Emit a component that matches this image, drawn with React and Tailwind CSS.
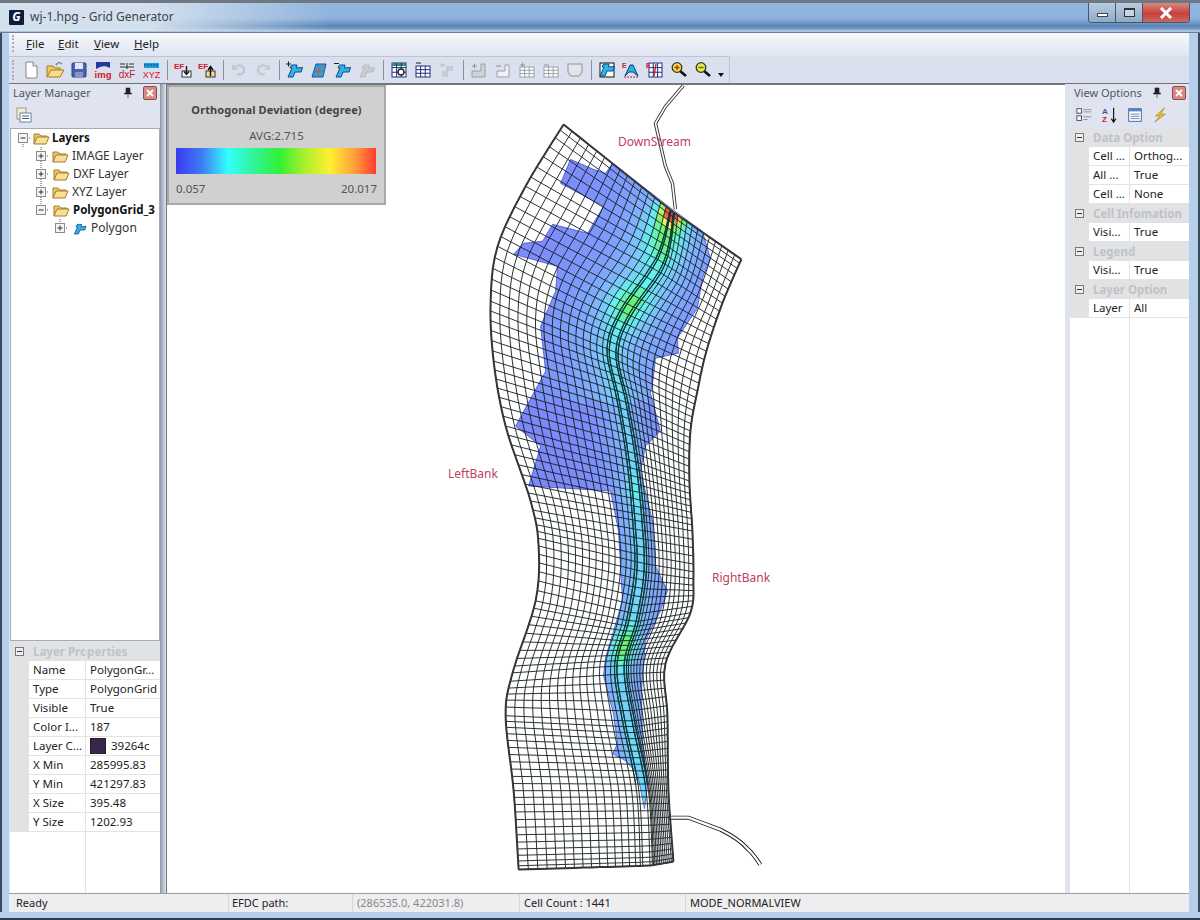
import React from 'react';

// --- grid mesh ---------------------------------------------------------
const stations = [
  [[563, 123], [672, 210], [741, 258]],
  [[525, 185], [660, 260], [722, 302]],
  [[497, 245], [625, 312], [706, 350]],
  [[490, 300], [612, 350], [697, 390]],
  [[493, 360], [622, 400], [690, 430]],
  [[505, 425], [632, 460], [689, 480]],
  [[530, 500], [638, 520], [692, 530]],
  [[538, 545], [640, 570], [693, 578]],
  [[535, 600], [632, 620], [690, 612]],
  [[512, 672], [620, 665], [665, 663]],
  [[505, 715], [628, 720], [667, 715]],
  [[513, 790], [642, 790], [668, 790]],
  [[518, 869], [646, 865], [673, 861]],
];
const rowsPerSpan = [7, 6, 5, 6, 7, 8, 6, 6, 9, 6, 11, 12];

const wetPolygon = [
  [570, 158], [593, 168], [605, 172], [612, 162], [672, 208], [702, 230], [710, 257], [702, 277], [697, 307],
  [677, 337], [678, 352], [655, 357], [653, 377], [650, 392], [660, 430], [645, 445], [640, 470], [652, 520],
  [655, 565], [667, 590], [660, 610], [645, 640], [641, 690], [642, 740], [647, 785], [644, 808], [637, 773],
  [625, 760], [612, 753], [617, 743], [613, 713], [603, 675], [605, 657], [622, 600], [618, 530], [610, 490],
  [528, 485], [540, 445], [515, 425], [545, 370], [540, 325], [555, 290], [557, 265], [513, 253], [523, 242],
  [542, 240], [552, 223], [587, 232], [603, 205], [560, 182],
];

const hotspots = [
  [673, 212, 0.72, 13],
  [660, 238, 0.18, 28],
  [628, 302, 0.2, 24],
  [622, 645, 0.22, 20],
  [634, 490, 0.08, 18],
];

const colorStops = [
  [0, [124, 128, 250]],
  [0.25, [127, 184, 255]],
  [0.42, [102, 240, 240]],
  [0.55, [102, 242, 110]],
  [0.78, [240, 240, 102]],
  [1, [240, 70, 50]],
];

function catmull(a, b, c, d, t) {
  return 0.5 * (2 * b + (c - a) * t + (2 * a - 5 * b + 4 * c - d) * t * t + (3 * b - a - 3 * c + d) * t * t * t);
}

function stationAt(u) {
  const i = Math.min(Math.floor(u), stations.length - 2);
  const t = u - i;
  const pick = (n) => stations[Math.max(0, Math.min(stations.length - 1, n))];
  return [0, 1, 2].map((p) => [0, 1].map((xy) => catmull(pick(i - 1)[p][xy], pick(i)[p][xy], pick(i + 1)[p][xy], pick(i + 2)[p][xy], t)));
}

const nL = 15;
const nR = 12;

function buildMesh() {
  const rows = [];
  rowsPerSpan.forEach((count, span) => {
    for (let k = 0; k < count; k++) rows.push(span + k / count);
  });
  rows.push(stations.length - 1);
  return rows.map((u) => {
    const [L, C, R] = stationAt(u);
    const len = Math.hypot(R[0] - L[0], R[1] - L[1]);
    const dir = [(R[0] - L[0]) / len, (R[1] - L[1]) / len];
    const w = Math.min(6, 2.5 + u * 3);
    const at = (o) => [C[0] + dir[0] * o * w, C[1] + dir[1] * o * w];
    const points = [];
    const CL = at(-1);
    const CR = at(1);
    for (let k = 0; k <= nL; k++) {
      const g = 1 - Math.pow(1 - k / nL, 1.2);
      points.push([L[0] + (CL[0] - L[0]) * g, L[1] + (CL[1] - L[1]) * g]);
    }
    [-0.6, 0.6].forEach((o) => points.push(at(o)));
    for (let k = 0; k <= nR; k++) {
      const g = Math.pow(k / nR, 1.2);
      points.push([CR[0] + (R[0] - CR[0]) * g, CR[1] + (R[1] - CR[1]) * g]);
    }
    return { u, points, C };
  });
}

function pointInPolygon(x, y) {
  let inside = false;
  for (let i = 0, j = wetPolygon.length - 1; i < wetPolygon.length; j = i++) {
    const [xi, yi] = wetPolygon[i];
    const [xj, yj] = wetPolygon[j];
    if (yi > y !== yj > y && x < ((xj - xi) * (y - yi)) / (yj - yi) + xi) inside = !inside;
  }
  return inside;
}

function deviationColor(x, y, C) {
  const d = Math.hypot(x - C[0], y - C[1]);
  const spread = y < 400 ? 38 : y < 520 ? 16 : 20;
  let v = 0.04 + 0.36 * Math.exp(-d / spread);
  hotspots.forEach(([hx, hy, a, r]) => {
    const q = Math.hypot(x - hx, y - hy) / r;
    v += a * Math.exp(-q * q);
  });
  v = Math.min(1, v);
  for (let i = 1; i < colorStops.length; i++) {
    if (v <= colorStops[i][0]) {
      const [a, ca] = colorStops[i - 1];
      const [b, cb] = colorStops[i];
      const t = (v - a) / (b - a);
      return `rgb(${ca.map((c, n) => Math.round(c + (cb[n] - c) * t)).join(',')})`;
    }
  }
  return 'rgb(240,70,50)';
}

const mesh = buildMesh();
const toPath = (pts) => 'M' + pts.map((p) => `${p[0].toFixed(1)} ${p[1].toFixed(1)}`).join('L');
const columnCount = mesh[0].points.length;

const rowLines = mesh.map((r) => toPath(r.points)).join('');
const columnLines = Array.from({ length: columnCount }, (_, c) => toPath(mesh.map((r) => r.points[c]))).join('');
const channelLines = [nL, nL + 1, nL + 2, nL + 3]
  .map((c) => toPath(mesh.filter((r) => r.u < 11).map((r) => r.points[c])))
  .join('');
const outline =
  toPath(mesh[0].points) +
  toPath(mesh.map((r) => r.points[columnCount - 1])) +
  toPath(mesh[mesh.length - 1].points) +
  toPath(mesh.map((r) => r.points[0]));

const cells = [];
for (let r = 0; r < mesh.length - 1; r++) {
  for (let c = 0; c < columnCount - 1; c++) {
    const quad = [mesh[r].points[c], mesh[r].points[c + 1], mesh[r + 1].points[c + 1], mesh[r + 1].points[c]];
    if (!quad.some((p) => pointInPolygon(p[0], p[1]))) {
      const mx = (quad[0][0] + quad[2][0]) / 2;
      const my = (quad[0][1] + quad[2][1]) / 2;
      if (!pointInPolygon(mx, my)) continue;
    }
    const x = quad.reduce((s, p) => s + p[0], 0) / 4;
    const y = quad.reduce((s, p) => s + p[1], 0) / 4;
    cells.push({ d: toPath(quad) + 'Z', fill: deviationColor(x, y, mesh[r].C) });
  }
}

function GridDrawing() {
  const riverTop = 'M683 84L665 105L655 122L665 165L672 182L675 208';
  const riverBottom = 'M668 817L688 817L720 829C732 835 742 842 747 848C752 852 756 858 760 864';
  return (
    <svg className="block h-full w-full" viewBox="166 84 899 808">
      <defs>
        <clipPath id="wet">
          <polygon points={wetPolygon.map((p) => p.join(',')).join(' ')} />
        </clipPath>
      </defs>
      <path d={riverTop} fill="none" stroke="#333" strokeWidth="3.4" />
      <path d={riverTop} fill="none" stroke="#fff" strokeWidth="1.6" />
      <path d={riverBottom} fill="none" stroke="#222" strokeWidth="4" />
      <path d={riverBottom} fill="none" stroke="#fff" strokeWidth="2.2" />
      <g clipPath="url(#wet)">
        {cells.map((cell, i) => (
          <path key={i} d={cell.d} fill={cell.fill} stroke={cell.fill} strokeWidth="0.5" />
        ))}
      </g>
      <polygon points={wetPolygon.map((p) => p.join(',')).join(' ')} fill="none" stroke="#3b3fd0" strokeWidth="0.7" />
      <path d={rowLines} fill="none" stroke="#141c1c" strokeWidth="0.9" />
      <path d={columnLines} fill="none" stroke="#141c1c" strokeWidth="0.9" />
      <path d={channelLines} fill="none" stroke="#0a3a3a" strokeWidth="1.2" />
      <path d={outline} fill="none" stroke="#33363c" strokeWidth="2" strokeLinejoin="round" />
    </svg>
  );
}

// --- small icons ---------------------------------------------------------
function Ico({ children, size = 20 }) {
  return (
    <svg width={size} height={size} viewBox="0 0 20 20" className="block">
      {children}
    </svg>
  );
}

const tiny = { fontFamily: '"Liberation Sans", sans-serif', fontWeight: 700 };
const PolyShape = ({ fill = '#2fb4e8', stroke = '#124a8c', x = 0, y = 0 }) => (
  <path transform={`translate(${x} ${y})`} d="M3 17L7 8H5L6.500 5H12L11.500 8L17.500 7.500L16 12L10 12L8 17Z" fill={fill} stroke={stroke} strokeWidth="1" />
);
const TableGrid = ({ x = 3, y = 6, w = 14, h = 11, stroke = '#1f2f80', head }) => (
  <g>
    <rect x={x} y={y} width={w} height={h} fill="#fff" stroke={stroke} />
    {head && <rect x={x} y={y} width={w} height="3" fill={head} />}
    {[0.33, 0.66].map((f) => (
      <path key={f} d={`M${x} ${y + h * f}H${x + w}M${x + w * f} ${y}V${y + h}`} stroke={stroke} />
    ))}
  </g>
);

const toolbarIcons = [
  <Ico key="new"><path d="M5 2H12L16 6V18H5Z" fill="#fff" stroke="#888" /><path d="M12 2V6H16" fill="#e8e8e8" stroke="#888" /></Ico>,
  <Ico key="open"><path d="M2 17V6H8L10 8H15V10" fill="#f0c860" stroke="#a87a20" /><path d="M2 17L6 10H19L15 17Z" fill="#f9dc8a" stroke="#a87a20" /><path d="M11 5C13 2 15 2 17 4" fill="none" stroke="#6a7f9a" strokeWidth="1.4" /></Ico>,
  <Ico key="save"><rect x="3" y="3" width="14" height="14" rx="1" fill="#4a62b4" stroke="#2f3f88" /><rect x="6" y="3" width="8" height="6" fill="#dfe6f5" /><rect x="6" y="12" width="8" height="5" fill="#8a94c0" /></Ico>,
  <Ico key="img"><path d="M3 2H17V8C12 5 8 6 3 9Z" fill="#2436a8" /><text x="10" y="18" textAnchor="middle" fontSize="9.5" fill="#d8152a" style={tiny}>img</text></Ico>,
  <Ico key="dxf"><path d="M3 4H8M12 4H17M3 7H17M10 3V9" stroke="#333" /><text x="10" y="18" textAnchor="middle" fontSize="10" fill="#c8152a" style={{ ...tiny, fontWeight: 400 }}>dxF</text></Ico>,
  <Ico key="xyz"><rect x="3" y="3" width="15" height="5" fill="#16a0d8" /><path d="M3 5H18" stroke="#123a80" strokeDasharray="2 1" /><text x="10.500" y="18" textAnchor="middle" fontSize="9" fill="#d8152a" style={{ ...tiny, fontWeight: 400 }}>XYZ</text></Ico>,
  'sep',
  <Ico key="ef1"><text x="1" y="9" fontSize="8" fill="#d8152a" style={tiny}>EF</text><rect x="9" y="11" width="9" height="6" fill="#fff" stroke="#333" /><path d="M13.500 6V14M11 11.500L13.500 14.500L16 11.500" fill="none" stroke="#111" strokeWidth="1.3" /></Ico>,
  <Ico key="ef2"><text x="1" y="9" fontSize="8" fill="#d8152a" style={tiny}>EF</text><rect x="9" y="11" width="9" height="6" fill="#f6d98a" stroke="#333" /><path d="M13.500 16V7M11 10L13.500 6.500L16 10" fill="none" stroke="#111" strokeWidth="1.4" /></Ico>,
  'sep',
  <Ico key="undo"><path d="M5 8C8 4 15 5 15 10C15 14 11 15 8 14" fill="none" stroke="#c4c8cf" strokeWidth="2.6" /><path d="M3 4V10H9Z" fill="#c4c8cf" /></Ico>,
  <Ico key="redo"><path d="M15 8C12 4 5 5 5 10C5 14 9 15 12 14" fill="none" stroke="#c8ccd2" strokeWidth="2.6" /><path d="M17 4V10H11Z" fill="#c8ccd2" /></Ico>,
  'sep',
  <Ico key="poly1"><PolyShape /><path d="M1 4H6M3.500 1.500V6.500" stroke="#123" /></Ico>,
  <Ico key="poly2"><path d="M3 17L7 4H17L14 17Z" fill="#29a0d8" stroke="#1f4fa8" /><path d="M5 11H16M12 4L8.500 17" stroke="#d8552a" /></Ico>,
  <Ico key="poly3"><PolyShape /><path d="M1 3.500H6" stroke="#123" /></Ico>,
  <Ico key="poly4"><PolyShape fill="#c8ccd2" stroke="#bbb" /></Ico>,
  'sep',
  <Ico key="tab1"><TableGrid x={3} y={3} h={14} head="#2f8f6f" /><circle cx="12" cy="12" r="3" fill="#fff" stroke="#222" strokeWidth="1.4" /></Ico>,
  <Ico key="tab2"><path d="M3 3H8" stroke="#123" /><TableGrid y={6} /></Ico>,
  <Ico key="tab3"><path d="M3 5H8M5.500 2.500V7.500" stroke="#c4c8cf" strokeWidth="1.4" /><path d="M9 6H16V11H11V17H5V11H9Z" fill="#c8ccd2" /></Ico>,
  'sep',
  <Ico key="b1"><path d="M3 6H8M5.500 3.500V8.500" stroke="#8b9099" /><path d="M3 11H12V4H16V17H3Z" fill="#d0d4da" stroke="#9aa0a8" /></Ico>,
  <Ico key="b2"><path d="M3 6H8" stroke="#8b9099" /><path d="M4 11H12V5H16V17H4Z" fill="#f0f2f6" stroke="#9aa0a8" /></Ico>,
  <Ico key="b3"><path d="M3 5H8M5.500 2.500V7.500" stroke="#8b9099" /><TableGrid y={7} w={14} h={10} stroke="#9aa0a8" /></Ico>,
  <Ico key="b4"><path d="M3 5H8" stroke="#8b9099" /><TableGrid y={7} w={14} h={10} stroke="#9aa0a8" /></Ico>,
  <Ico key="b5"><path d="M3 4H17V12L14 16H6L3 12Z" fill="#e4e6ea" stroke="#aab0b6" strokeWidth="1.6" /></Ico>,
  'sep',
  <Ico key="c1"><rect x="3" y="3" width="14" height="14" fill="#fff" stroke="#111" /><PolyShape x={0} y={-1} /></Ico>,
  <Ico key="c2"><path d="M4 16L9 5L12 5L17 16L12 12L8 12Z" fill="#22b6e0" stroke="#123a90" /><text x="1" y="8" fontSize="7" fill="#d8152a" style={tiny}>E</text><path d="M3 17H17" stroke="#d8152a" strokeDasharray="2 1" /></Ico>,
  <Ico key="c3"><TableGrid x={4} y={3} w={13} h={14} /><path d="M11 4L9 16" stroke="#d8152a" strokeWidth="1.4" /><text x="1" y="8" fontSize="7" fill="#d8152a" style={tiny}>E</text></Ico>,
  <Ico key="z1"><path d="M11 11L17 16" stroke="#111" strokeWidth="2.6" /><circle cx="8" cy="7.500" r="4.800" fill="#e8e83a" stroke="#333" strokeWidth="1.3" /><path d="M5.500 7.500H10.500M8 5V10" stroke="#d8152a" strokeWidth="1.3" /></Ico>,
  <Ico key="z2"><path d="M11 11L17 16" stroke="#111" strokeWidth="2.6" /><circle cx="8" cy="7.500" r="4.800" fill="#e8e83a" stroke="#333" strokeWidth="1.3" /><path d="M5.500 7.500H10.500" stroke="#555" strokeWidth="1.3" /></Ico>,
];

const FolderIcon = () => (
  <svg width="17" height="14" viewBox="0 0 17 14" className="shrink-0">
    <path d="M1 13V3H6L8 5H14V7" fill="#f0c860" stroke="#a47c2c" />
    <path d="M1 13L4 6H16L13 13Z" fill="#f9e098" stroke="#a47c2c" />
  </svg>
);

function PlusMinus({ open, down = true, up = true }) {
  return (
    <svg width="16" height="18" viewBox="0 0 16 18" className="shrink-0">
      <path d={`M8 ${up ? 0 : 9}V${down ? 18 : 9}M8 9H16`} stroke="#555" strokeDasharray="1 1" fill="none" />
      <rect x="3.500" y="4.500" width="9" height="9" fill="#f4f4f4" stroke="#8a8a8a" />
      <path d={open ? 'M5.500 9H10.500' : 'M5.500 9H10.500M8 6.500V11.500'} stroke="#333" />
    </svg>
  );
}

const treeRows = [
  { label: 'Layers', pad: 'pl-[4px]', open: true, bold: true, up: false, icon: 'folder', gap: 'gap-[2px]' },
  { label: 'IMAGE Layer', pad: 'pl-[22px]', icon: 'folder', gap: 'gap-[3px]' },
  { label: 'DXF Layer', pad: 'pl-[22px]', icon: 'folder', gap: 'gap-[3.5px]' },
  { label: 'XYZ Layer', pad: 'pl-[22px]', icon: 'folder', gap: 'gap-[3px]' },
  { label: 'PolygonGrid_3', pad: 'pl-[22px]', open: true, bold: true, down: false, icon: 'folder', gap: 'gap-[3.5px]' },
  { label: 'Polygon', pad: 'pl-[41px]', icon: 'poly', down: false, gap: 'gap-[3.5px]' },
];

const layerProps = [
  ['Name', 'PolygonGr...'],
  ['Type', 'PolygonGrid'],
  ['Visible', 'True'],
  ['Color I...', '187'],
  ['Layer C...', '39264c', true],
  ['X Min', '285995.83'],
  ['Y Min', '421297.83'],
  ['X Size', '395.48'],
  ['Y Size', '1202.93'],
];

const viewGroups = [
  ['Data Option', [['Cell ...', 'Orthog...'], ['All ...', 'True'], ['Cell ...', 'None']]],
  ['Cell Infomation', [['Visi...', 'True']]],
  ['Legend', [['Visi...', 'True']]],
  ['Layer Option', [['Layer', 'All']]],
];

function PanelHeader({ title, closeMargin }) {
  return (
    <div className="flex h-[18px] items-center pl-[4px] pr-[2px] text-[11px] text-[#50565e]">
      <span className="flex-1">{title}</span>
      <svg width="10" height="12" viewBox="0 0 10 12" className="mr-[10px]">
        <path d="M3 1H7V6H8.500V7H1.500V6H3ZM5 7V11" fill="#222" stroke="#222" strokeWidth="0.6" />
      </svg>
      <span className={`flex h-[14px] w-[14px] items-center justify-center rounded-[2px] border border-[#8a4a48] bg-[#d88a82] ${closeMargin}`}>
        <svg width="8" height="8" viewBox="0 0 8 8">
          <path d="M1 1L7 7M7 1L1 7" stroke="#fff" strokeWidth="1.8" />
        </svg>
      </span>
    </div>
  );
}

function GroupRow({ title }) {
  return (
    <div className="flex h-[19px] shrink-0 items-center bg-[#e1e2e4] pl-[5px]">
      <span className="flex h-[9px] w-[9px] items-center justify-center border border-[#777] bg-[#eee]">
        <span className="h-px w-[5px] bg-[#333]" />
      </span>
      <span className="pl-[9px] text-[11.5px] font-bold text-[#c0c2c6]">{title}</span>
    </div>
  );
}

function PropRow({ name, value, swatch, nameWidth }) {
  return (
    <div className="flex h-[19px] shrink-0 text-[11.5px]">
      <div className="w-[19px] shrink-0 bg-[#e1e2e4]" />
      <div className={`${nameWidth} shrink-0 truncate border-b border-r border-[#e2e3e5] bg-white pl-[4px] text-[#222]`}>{name}</div>
      <div className="flex min-w-0 flex-1 items-center gap-[5px] border-b border-[#e2e3e5] bg-white pl-[4px] text-[#222]">
        {swatch && <span className="h-[16px] w-[16px] shrink-0 border border-[#222] bg-[#39264c]" />}
        <span>{value}</span>
      </div>
    </div>
  );
}

function LeftPanel() {
  return (
    <div className="flex w-[151px] shrink-0 flex-col bg-[#dfe4f0]">
      <PanelHeader title="Layer Manager" closeMargin="mr-[1px]" />
      <div className="flex h-[26px] items-center pl-[6px]">
        <svg width="18" height="18" viewBox="0 0 18 18">
          <rect x="2" y="2" width="9" height="11" fill="#f4ecd0" stroke="#9a9a8a" />
          <rect x="5" y="7" width="11" height="9" fill="#fff" stroke="#6f7f99" />
          <path d="M7 10H14M7 12.500H14" stroke="#40608c" />
        </svg>
      </div>
      <div className="ml-px flex h-[513px] flex-col border border-[#a8abb2] bg-white">
        {treeRows.map((row) => (
          <div key={row.label} className={`flex h-[18px] shrink-0 items-center ${row.pad} ${row.gap}`}>
            <PlusMinus open={row.open} down={row.down !== false} up={row.up !== false} />
            {row.icon === 'folder' ? (
              <FolderIcon />
            ) : (
              <svg width="16" height="14" viewBox="0 0 20 17" className="shrink-0">
                <PolyShape y={-1} />
              </svg>
            )}
            <span className={row.bold ? 'text-[11.5px] font-bold text-[#111]' : 'text-[#333]'}>{row.label}</span>
          </div>
        ))}
      </div>
      <div className="relative ml-px mt-[1px] flex flex-1 flex-col bg-white">
        <div className="absolute bottom-0 left-[75px] top-0 w-px bg-[#e2e3e5]" />
        <GroupRow title="Layer Properties" />
        {layerProps.map(([name, value, swatch]) => (
          <div key={name} className="relative">
            <PropRow name={name} value={value} swatch={swatch} nameWidth="w-[57px]" />
          </div>
        ))}
      </div>
    </div>
  );
}

function RightPanel() {
  return (
    <div className="flex w-[119px] shrink-0 flex-col bg-[#dfe4f0]">
      <PanelHeader title="View Options" closeMargin="mr-[1px]" />
      <div className="flex h-[26px] items-center gap-[7px] pl-[6px]">
        <Ico size={18}>
          <rect x="1" y="3" width="5" height="5" fill="#fff" stroke="#444" />
          <rect x="1" y="11" width="5" height="5" fill="#fff" stroke="#444" />
          <path d="M8 4H17M8 6.500H17M8 12H17M8 15H13" stroke="#8a93a8" />
        </Ico>
        <Ico size={18}>
          <text x="1" y="9" fontSize="9" fill="#3a56a8" style={tiny}>A</text>
          <text x="1" y="18" fontSize="9" fill="#c8203a" style={tiny}>Z</text>
          <path d="M14 2V17M11.500 14L14 18L16.500 14" fill="none" stroke="#111" strokeWidth="1.3" />
        </Ico>
        <Ico size={18}>
          <rect x="3" y="3" width="14" height="14" fill="#fff" stroke="#3a5aa0" />
          <rect x="3" y="3" width="14" height="3" fill="#5a86c8" />
          <path d="M5 9H15M5 11.500H15M5 14H15" stroke="#5a7ab0" />
        </Ico>
        <Ico size={18}>
          <path d="M15 2L5 11H10L4 18L16 9H11Z" fill="#f0c020" stroke="#a08020" strokeWidth="0.7" />
        </Ico>
      </div>
      <div className="relative flex flex-1 flex-col bg-white">
        <div className="absolute bottom-0 left-[59px] top-0 w-px bg-[#e2e3e5]" />
        {viewGroups.map(([title, rows]) => (
          <div key={title} className="relative flex flex-col">
            <GroupRow title={title} />
            {rows.map(([name, value], i) => (
              <PropRow key={i} name={name} value={value} nameWidth="w-[41px]" />
            ))}
          </div>
        ))}
      </div>
    </div>
  );
}

function Legend() {
  return (
    <div className="absolute left-0 top-0 flex h-[120px] w-[219px] flex-col border-2 border-[#a6a8ac] bg-[#d0d0d0] px-[7px]">
      <div className="mt-[14px] text-center text-[11px] font-bold leading-[18px] tracking-[0.1px] text-[#444]">Orthogonal Deviation (degree)</div>
      <div className="mt-[8px] text-center text-[11.5px] leading-[18px] text-[#555]">AVG:2.715</div>
      <div className="mt-[3px] h-[26px] w-[200px] bg-[linear-gradient(to_right,#3a3af0_0%,#3f7cf5_13%,#33ffff_26%,#30f5a0_38%,#33f033_52%,#a8f02e_64%,#fff030_77%,#ff9a3a_90%,#ff3a30_100%)]" />
      <div className="mt-[6px] flex justify-between text-[11.5px] leading-[18px] text-[#555]">
        <span>0.057</span>
        <span>20.017</span>
      </div>
    </div>
  );
}

export default function App() {
  return (
    <div className="flex h-[920px] w-[1200px] flex-col overflow-hidden bg-[#a9c8ea] font-['Noto_Sans','Liberation_Sans',sans-serif] text-[12px] leading-[18px]">
      <div className="flex h-[33px] shrink-0 items-start border-t-[3px] border-[#6f7880] bg-[linear-gradient(to_bottom,#8fb5df_0%,#8fb3dd_50%,#5a85b6_78%,#7ea4cf_88%,#c4d8ee_94%,#3f5f85_100%)]">
        <div className="flex h-[28px] w-[330px] items-center bg-[linear-gradient(to_right,#d3e0ee_0%,#d3e0ee_45%,rgba(211,224,238,0)_100%)] pl-[9px]">
          <span className="flex h-[15px] w-[15px] items-center justify-center rounded-[1px] bg-[#0d1b3e] text-[12px] font-bold italic text-white">G</span>
          <span className="pl-[6px] text-[12px] text-[#3d434b]">wj-1.hpg - Grid Generator</span>
        </div>
        <div className="ml-[758px] flex h-[20px] w-[102px] overflow-hidden rounded-b-[4px] border border-t-0 border-[#46566a]">
          <span className="flex w-[27px] items-center justify-center border-r border-[#46566a] bg-[linear-gradient(to_bottom,#b8cde3,#8fa9c6)]">
            <span className="mt-[5px] h-[4px] w-[11px] border border-[#444] bg-white" />
          </span>
          <span className="flex w-[27px] items-center justify-center border-r border-[#46566a] bg-[linear-gradient(to_bottom,#b8cde3,#8fa9c6)]">
            <span className="h-[9px] w-[11px] border border-t-2 border-[#333] bg-[#c8d6e6]" />
          </span>
          <span className="flex flex-1 items-center justify-center bg-[linear-gradient(to_bottom,#d98a80,#c8403a_55%,#c86a60)]">
            <svg width="14" height="12" viewBox="0 0 14 12">
              <path d="M2 1L12 11M12 1L2 11" stroke="#fff" strokeWidth="3" />
            </svg>
          </span>
        </div>
      </div>

      <div className="flex min-h-0 flex-1">
        <div className="w-[9px] shrink-0 border-l-2 border-[#3c4a5c] bg-[#b6d0ec]" />
        <div className="flex w-[1180px] shrink-0 flex-col bg-[#dfe4f0]">
          <div className="flex h-[23px] shrink-0 items-center pb-[2px] bg-[linear-gradient(to_bottom,#f6f8fc,#dfe5f2)]">
            <span className="ml-[3px] h-[17px] border-l-2 border-dotted border-[#a8b0c0]" />
            <div className="flex pl-[12px] text-[#222]">
              {[['F', 'ile', 'w-[32px]'], ['E', 'dit', 'w-[36px]'], ['V', 'iew', 'w-[40px]'], ['H', 'elp', 'w-[40px]']].map(([a, b, w]) => (
                <span key={a} className={`${w} text-[11.5px]`}>
                  <span className="underline">{a}</span>
                  {b}
                </span>
              ))}
            </div>
          </div>
          <div className="flex h-[28px] shrink-0 items-center border-b border-[#70747c] bg-[#dbe0ee]">
            <div className="flex h-full items-center border-r border-t border-[#c0c4d0]">
              <span className="ml-[3px] h-[20px] border-l-2 border-dotted border-[#a8b0c0]" />
              <div className="flex items-center pl-[5px] pr-[4px]">
                {toolbarIcons.map((icon, i) =>
                  icon === 'sep' ? (
                    <span key={i} className="mx-[3.5px] h-[20px] w-px shrink-0 bg-[#8a8f9a]" />
                  ) : (
                    <span key={i} className="flex w-[24px] justify-center">
                      {icon}
                    </span>
                  ),
                )}
                <svg width="8" height="6" viewBox="0 0 8 6" className="ml-[2px] mt-[10px]">
                  <path d="M1 1H7L4 5Z" fill="#111" />
                </svg>
              </div>
            </div>
          </div>
          <div className="flex h-[809px] shrink-0">
            <LeftPanel />
            <div className="w-[6px] shrink-0 bg-[linear-gradient(to_right,#8d96aa,#dfe4f0)]" />
            <div className="relative w-[899px] shrink-0 overflow-hidden border-l border-t border-[#777] bg-white">
              <GridDrawing />
              <Legend />
              <span className="absolute left-[451px] top-[48px] text-[#c04062]">DownStream</span>
              <span className="absolute left-[281px] top-[380px] text-[#c04062]">LeftBank</span>
              <span className="absolute left-[545px] top-[484px] text-[#c04062]">RightBank</span>
            </div>
            <div className="w-[5px] shrink-0 bg-[#dfe4f0]" />
            <RightPanel />
          </div>
          <div className="flex h-[19px] flex-1 items-center border-t border-[#9a9ea8] bg-[#eeeef0] text-[11px] text-[#222]">
            <div className="w-[219px] pl-[7px]">Ready</div>
            <div className="w-[124px] border-l border-[#d8d8da] pl-[3px]">EFDC path:</div>
            <div className="w-[167px] border-l border-[#d8d8da] pl-[4px] text-[#888]">(286535.0, 422031.8)</div>
            <div className="w-[166px] border-l border-[#d8d8da] pl-[4px]">Cell Count : 1441</div>
            <div className="border-l border-[#d8d8da] pl-[4px]">MODE_NORMALVIEW</div>
          </div>
        </div>
        <div className="flex-1 border-r-2 border-[#3c4a5c] bg-[#b6d0ec]" />
      </div>
      <div className="h-[8px] shrink-0 border-b-2 border-[#2f3a48] bg-[#b6d0ec]" />
    </div>
  );
}
